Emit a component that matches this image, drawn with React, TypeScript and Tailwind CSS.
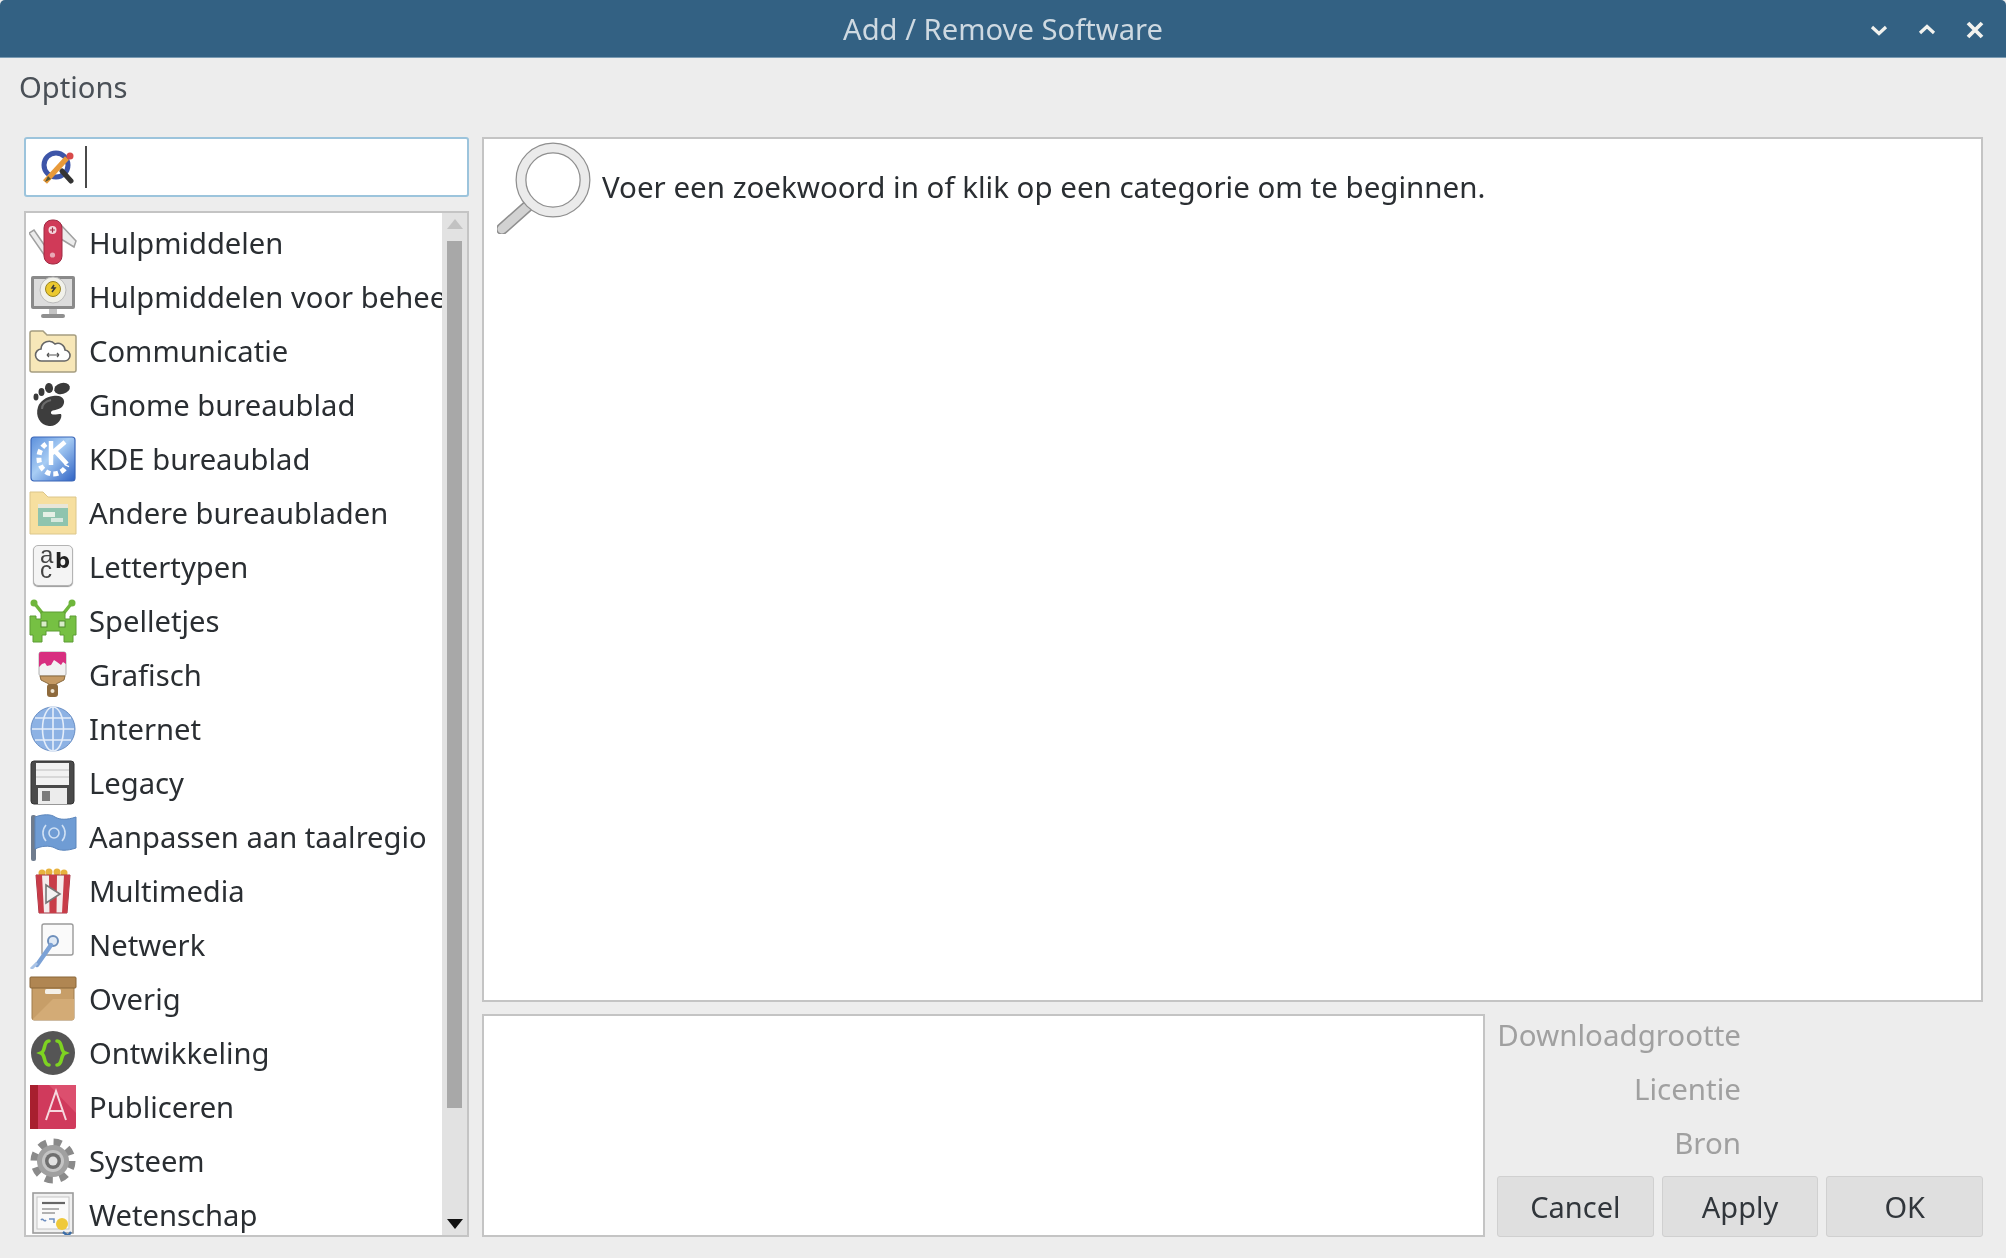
import React from "react";

const S = ({ children }: { children: React.ReactNode }) => (
  <svg viewBox="0 0 48 48" className="w-[48px] h-[48px] shrink-0">{children}</svg>
);

const IconUtilities = () => (
  <S>
    <path d="M0 14 L5 11 L18 30 L16 37 Z" fill="#ececec" stroke="#a0a0a0" strokeWidth="1.5" />
    <path d="M32 6 L47 22 L45 28 L32 20 Z" fill="#ececec" stroke="#a0a0a0" strokeWidth="1.5" />
    <rect x="15" y="1" width="18" height="44" rx="8" fill="#d03a58" stroke="#9f2a42" strokeWidth="1" />
    <circle cx="23.5" cy="11" r="4" fill="#f4d8de" />
    <path d="M23.5 8.5v5M21 11h5" stroke="#a02a42" strokeWidth="1.2" />
    <circle cx="23.5" cy="36" r="2.6" fill="#e8a9b6" />
  </S>
);
const IconAdmin = () => (
  <S>
    <rect x="2" y="3" width="44" height="33" rx="2" fill="#8a8a8a" />
    <rect x="5" y="6" width="38" height="27" fill="#dcdcdc" />
    <circle cx="24" cy="17" r="13" fill="#f1f1ea" stroke="#bbb" strokeWidth="1" />
    <circle cx="24" cy="16" r="7.5" fill="#ecc92f" stroke="#9a8420" strokeWidth="1" />
    <path d="M25 12 l-2 3 h3 l-3 4" stroke="#3a3a3a" strokeWidth="1.5" fill="none" />
    <rect x="20" y="36" width="8" height="5" fill="#c4c4c4" />
    <rect x="12" y="41" width="24" height="4" rx="2" fill="#8f8f8f" />
  </S>
);
const IconComm = () => (
  <S>
    <path d="M1 8 V6 a2 2 0 0 1 2-2 h11 l4 4 h27 a2 2 0 0 1 2 2 v33 a2 2 0 0 1-2 2 H3 a2 2 0 0 1-2-2 Z" fill="#f7e7b8" stroke="#a59d80" strokeWidth="1.5" />
    <path d="M13 34 a6 6 0 0 1-1-12 a8 8 0 0 1 14-5 a7 7 0 0 1 10 6 a5.5 5.5 0 0 1-1 11 Z" fill="#fff" stroke="#666" strokeWidth="1.6" />
    <path d="M18 28 h12 M18 28 l2-2 M18 28 l2 2 M30 28 l-2-2 M30 28 l-2 2" stroke="#555" strokeWidth="1.2" fill="none" />
  </S>
);
const IconGnome = () => (
  <S>
    <ellipse cx="33" cy="7.5" rx="8" ry="5.5" fill="#3a3a3a" transform="rotate(-15 33 7.5)" />
    <ellipse cx="20" cy="7" rx="4" ry="5" fill="#3a3a3a" transform="rotate(-5 20 7)" />
    <ellipse cx="12.5" cy="11" rx="3" ry="4" fill="#3a3a3a" />
    <ellipse cx="7" cy="16" rx="2.5" ry="3.4" fill="#3a3a3a" />
    <path d="M24 15 C34 13 38 20 33 26 C28 30 24 28 22 31 C21 35 28 33 32 33 C34 37 28 46 20 45 C11 44 6 35 9 26 C11 20 17 16 24 15 Z" fill="#3d3d3d" />
    <path d="M13 28 C13 22 18 20 22 19" stroke="#6b6b6b" strokeWidth="2" fill="none" />
  </S>
);
const IconKde = () => (
  <S>
    <defs>
      <linearGradient id="kde" x1="0" y1="0" x2="1" y2="1">
        <stop offset="0" stopColor="#5b8fdc" />
        <stop offset="0.45" stopColor="#a8cdf4" />
        <stop offset="1" stopColor="#2f62c4" />
      </linearGradient>
    </defs>
    <rect x="2" y="2" width="44" height="44" rx="3" fill="url(#kde)" stroke="#3a66b8" strokeWidth="1.2" />
    <path d="M17 9 A16 16 0 0 0 10 24 A15 15 0 0 0 24 39 A15 15 0 0 0 38 30" fill="none" stroke="#fff" strokeWidth="5" strokeDasharray="5 3" />
    <path d="M22 6 V30 M22 19 L36 7 M26 16 L38 29" stroke="#fff" strokeWidth="4.5" fill="none" />
  </S>
);
const IconDesktops = () => (
  <S>
    <path d="M1 3 h13 l5 5 h28 v37 H1 Z" fill="#f6df9f" stroke="#dcc68a" strokeWidth="1" />
    <rect x="9" y="15" width="30" height="22" fill="#e8e6d8" />
    <rect x="9" y="19" width="30" height="18" fill="#8fc4ae" />
    <rect x="14" y="23" width="12" height="5" fill="#e6f0e6" />
    <rect x="22" y="29" width="12" height="4" fill="#d6e8de" />
  </S>
);
const IconFonts = () => (
  <div className="relative w-[48px] h-[48px] shrink-0">
    <div className="absolute left-[4px] top-[2px] w-[40px] h-[41px] rounded-[5px] bg-[#f4f4f4] border border-[#b4b4b4] shadow-[0_1px_1px_#999]" />
    <span className="absolute left-[11px] top-[4px] w-[14px] whitespace-pre-line text-[24px] leading-[15px] font-['Liberation_Sans',sans-serif] text-[#444]">{"a\nc"}</span>
    <span className="absolute left-[26px] top-[8px] text-[21px] leading-[20px] font-bold font-['DejaVu_Sans',sans-serif] text-[#222]">b</span>
  </div>
);
const IconGames = () => (
  <S>
    <circle cx="5" cy="6" r="3.5" fill="#6fb63c" />
    <circle cx="43" cy="6" r="3.5" fill="#6fb63c" />
    <path d="M6 7 L14 17 M42 7 L34 17" stroke="#6fb63c" strokeWidth="3.5" />
    <path d="M12 15 h24 v7 h5 v-3 h6 v19 h-3 v7 h-9 v-7 h-4 v-4 h-14 v4 h-4 v7 h-9 v-7 h-3 V19 h6 v3 h5 Z" fill="#76c043" stroke="#5d9c34" strokeWidth="1" />
    <rect x="12" y="24" width="6" height="6" fill="#d8ecc8" stroke="#4e8a2c" />
    <rect x="30" y="24" width="6" height="6" fill="#d8ecc8" stroke="#4e8a2c" />
  </S>
);
const IconGraphics = () => (
  <S>
    <rect x="10" y="1" width="27" height="24" rx="2" fill="#f2f2f2" stroke="#b0b0b0" />
    <path d="M10 3 a2 2 0 0 1 2-2 h23 a2 2 0 0 1 2 2 v10 l-3-2 -2 3 -4-3 -3-2 -3 5 -4 1 -2-3 -3 1 -3 3 Z" fill="#d82f80" />
    <path d="M11 25 h25 l-1 4 -8 4 v7 h-7 v-7 l-8-4 Z" fill="#c59a64" stroke="#8a6a3e" />
    <rect x="18" y="33" width="11" height="13" rx="3" fill="#8e6a3c" />
    <circle cx="23.5" cy="40" r="2" fill="#efe6d4" />
  </S>
);
const IconInternet = () => (
  <S>
    <circle cx="24" cy="24" r="22" fill="#8db2e4" stroke="#6a8fc4" strokeWidth="1" />
    <path d="M3 24 H45 M6 13 H42 M6 35 H42 M24 2 V46" stroke="#e4edf9" strokeWidth="1.6" fill="none" />
    <ellipse cx="24" cy="24" rx="10.5" ry="22" stroke="#e4edf9" strokeWidth="1.6" fill="none" />
  </S>
);
const IconLegacy = () => (
  <S>
    <path d="M2 5 a3 3 0 0 1 3-3 h37 a3 3 0 0 1 3 3 v37 a3 3 0 0 1-3 3 H5 a3 3 0 0 1-3-3 Z" fill="#4a4a4a" stroke="#333" />
    <rect x="7" y="4" width="33" height="22" fill="#f2f2f2" />
    <path d="M7 11 h33 M7 18 h33" stroke="#bdbdbd" strokeWidth="1.2" />
    <rect x="9" y="29" width="29" height="16" fill="#ececec" />
    <rect x="13" y="32" width="8" height="10" fill="#7a7a7a" />
  </S>
);
const IconLocale = () => (
  <S>
    <rect x="2" y="2" width="5" height="46" rx="2" fill="#6f7c8e" />
    <path d="M6 4 C14 1 22 1 26 4 C31 7 38 7 47 4 V35 C38 38 31 38 26 35 C20 32 12 33 6 36 Z" fill="#6f9cd4" stroke="#5c86bc" />
    <circle cx="25" cy="20" r="5" fill="none" stroke="#cfe0f4" strokeWidth="1.6" />
    <path d="M17 12 a12 12 0 0 0 0 16 M33 12 a12 12 0 0 1 0 16" stroke="#cfe0f4" strokeWidth="1.6" fill="none" />
  </S>
);
const IconMultimedia = () => (
  <S>
    <circle cx="13" cy="6" r="3.5" fill="#e7b23e" />
    <circle cx="20" cy="5" r="3.5" fill="#e7b23e" />
    <circle cx="28" cy="5" r="3.5" fill="#e7b23e" />
    <circle cx="35" cy="6" r="3.5" fill="#e7b23e" />
    <path d="M7 8 H41 L38 46 H10 Z" fill="#f4ecec" stroke="#a03040" />
    <path d="M7 8 H13 L15 46 H10 Z M20 8 H28 L27.5 46 H20.5 Z M35 8 H41 L38 46 H33 Z" fill="#c83c48" />
    <path d="M17 18 L31 27 L17 36 Z" fill="#f2f2f2" stroke="#777" strokeWidth="1.6" />
  </S>
);
const IconNetwork = () => (
  <S>
    <rect x="13" y="3" width="31" height="31" rx="2" fill="#fafafa" stroke="#9a9a9a" strokeWidth="1.4" />
    <circle cx="24" cy="20" r="5" fill="#dfe9f5" stroke="#6e8fbb" strokeWidth="2" />
    <path d="M22 24 L8 44" stroke="#7ca2d6" strokeWidth="4.5" strokeLinecap="round" />
    <path d="M2 48 L8 42" stroke="#a9c3e6" strokeWidth="3" />
  </S>
);
const IconOverig = () => (
  <S>
    <rect x="3" y="8" width="42" height="37" rx="2" fill="#c79e68" stroke="#a07c4c" />
    <path d="M3 45 L24 24 H45 V45 Z" fill="#d3ab76" />
    <rect x="1" y="2" width="46" height="11" rx="1" fill="#b08652" stroke="#8a6638" />
    <rect x="16" y="14" width="16" height="5" rx="1.5" fill="#f4f0e8" />
  </S>
);
const IconDev = () => (
  <S>
    <circle cx="24" cy="24" r="22" fill="#555" />
    <path d="M20 12 C14 12 17 22 12 24 C17 26 14 36 20 36 M28 12 C34 12 31 22 36 24 C31 26 34 36 28 36" stroke="#7ed321" strokeWidth="3.6" fill="none" strokeLinecap="round" />
  </S>
);
const IconPublish = () => (
  <S>
    <rect x="1" y="2" width="46" height="44" rx="2" fill="#d03a5c" />
    <path d="M9 2 H1 V46 H9 Z" fill="#a81f2f" />
    <path d="M47 2 V30 L20 2 Z" fill="#dc4f6e" />
    <path d="M17 37 L27 8 L37 37 M20 28 H34" stroke="#f6d8de" strokeWidth="2" fill="none" />
  </S>
);
const IconSystem = () => (
  <S>
    <circle cx="24" cy="24" r="17" fill="none" stroke="#8a8a8a" strokeWidth="11" strokeDasharray="7 6.35" />
    <circle cx="24" cy="24" r="16" fill="#a0a0a0" />
    <circle cx="24" cy="24" r="11" fill="#c4c4c4" />
    <circle cx="24" cy="24" r="8" fill="#6f6f6f" />
    <circle cx="24" cy="24" r="4.5" fill="#e2e2e2" />
  </S>
);
const IconScience = () => (
  <S>
    <rect x="4" y="2" width="40" height="40" fill="#f0f0f0" stroke="#9c9c9c" strokeWidth="1.6" />
    <rect x="8" y="6" width="32" height="32" fill="#fafafa" stroke="#c4c4c4" />
    <path d="M13 12 H36" stroke="#666" strokeWidth="2.2" />
    <path d="M13 18 H30 M13 22 H26" stroke="#999" strokeWidth="1.5" />
    <path d="M12 29 c2-3 3 3 5 0 M20 28 h5 v4" stroke="#6d8ec0" strokeWidth="1.5" fill="none" />
    <circle cx="33" cy="33" r="6" fill="#efc93a" />
    <path d="M34 41 l5 4 3-4" stroke="#3c6ea8" strokeWidth="2.4" fill="none" />
  </S>
);

const items: [string, React.FC][] = [
  ["Hulpmiddelen", IconUtilities],
  ["Hulpmiddelen voor beheer", IconAdmin],
  ["Communicatie", IconComm],
  ["Gnome bureaublad", IconGnome],
  ["KDE bureaublad", IconKde],
  ["Andere bureaubladen", IconDesktops],
  ["Lettertypen", IconFonts],
  ["Spelletjes", IconGames],
  ["Grafisch", IconGraphics],
  ["Internet", IconInternet],
  ["Legacy", IconLegacy],
  ["Aanpassen aan taalregio", IconLocale],
  ["Multimedia", IconMultimedia],
  ["Netwerk", IconNetwork],
  ["Overig", IconOverig],
  ["Ontwikkeling", IconDev],
  ["Publiceren", IconPublish],
  ["Systeem", IconSystem],
  ["Wetenschap", IconScience],
];

const Btn = ({ label }: { label: string }) => (
  <button className="flex-1 rounded-[3px] bg-[#dfdfdf] border border-[#d0d0d0] text-[#31363b] text-[29px] leading-none">
    {label}
  </button>
);

export default function App() {
  return (
    <div className="w-[2006px] h-[1258px] flex flex-col overflow-hidden bg-[#ededed] text-[#31363b] text-[29.5px] font-['Noto_Sans',sans-serif] blur-[0.5px]">
      <header className="relative h-[58px] shrink-0 flex items-center justify-center bg-[#336183] border-b border-[#7a9bb3] rounded-t-[5px]">
        <span className="text-[#ced9e1] text-[29.2px] pt-[3px]">Add / Remove Software</span>
        <div className="absolute right-[22px] top-[21px] flex gap-[30px]">
          <svg viewBox="0 0 18 18" className="w-[18px] h-[18px]">
            <path d="M2 6 L9 12.5 L16 6" stroke="#f2f2ee" strokeWidth="3.2" fill="none" />
          </svg>
          <svg viewBox="0 0 18 18" className="w-[18px] h-[18px]">
            <path d="M2 12 L9 5.5 L16 12" stroke="#f2f2ee" strokeWidth="3.2" fill="none" />
          </svg>
          <svg viewBox="0 0 18 18" className="w-[18px] h-[18px]">
            <path d="M2 2 L16 16 M16 2 L2 16" stroke="#f2f2ee" strokeWidth="3.8" fill="none" />
          </svg>
        </div>
      </header>

      <div className="h-[79px] shrink-0 px-[19px] pt-[10px] text-[29.2px] leading-[38px] text-[#4a5057]">Options</div>

      <main className="flex-1 min-h-0 flex gap-[13px] pl-[24px] pr-[23px] pb-[21px]">
        <aside className="w-[445px] shrink-0 flex flex-col gap-[14px]">
          <div className="h-[60px] shrink-0 flex items-center gap-[10px] pl-[15px] bg-white border-2 border-[#9cc4dc] rounded-[3px]">
            <svg viewBox="0 0 34 34" className="w-[34px] h-[34px]">
              <circle cx="15" cy="15" r="12" fill="none" stroke="#3d55a8" strokeWidth="5" />
              <path d="M30 31 L21 21" stroke="#333" strokeWidth="5" strokeLinecap="round" />
              <path d="M4 32 L26 8" stroke="#e89a3a" strokeWidth="5.5" />
              <path d="M4 32 L7 26 L10 29 Z" fill="#553" />
              <circle cx="29" cy="6" r="3.5" fill="#d84a4a" />
            </svg>
            <span className="w-[2px] h-[42px] bg-[#4a4a4a]" />
          </div>

          <div className="flex-1 min-h-0 flex border-2 border-[#c4c4c4] bg-white">
            <ul className="flex-1 min-w-0 overflow-hidden pt-[3px] pl-[3px] text-[29.2px]">
              {items.map(([label, Icon]) => (
                <li key={label} className="h-[54px] flex items-center gap-[12px] whitespace-nowrap">
                  <Icon />
                  <span className="pt-[2px] text-[#2a2e32]">{label}</span>
                </li>
              ))}
            </ul>
            <div className="w-[25px] shrink-0 flex flex-col items-center bg-[#e2e2e2] pt-[6px] pb-[6px]">
              <svg viewBox="0 0 16 10" className="w-[16px] h-[10px] shrink-0">
                <path d="M0 10 L8 0 L16 10 Z" fill="#c2c2c2" />
              </svg>
              <div className="w-[15px] h-[867px] mt-[12px] shrink-0 bg-[#a8a8a8]" />
              <div className="flex-1" />
              <svg viewBox="0 0 16 10" className="w-[16px] h-[10px] shrink-0">
                <path d="M0 0 L16 0 L8 10 Z" fill="#111" />
              </svg>
            </div>
          </div>
        </aside>

        <section className="flex-1 min-w-0 flex flex-col gap-[12px]">
          <div className="flex-1 min-h-0 flex items-start gap-[11px] pl-[13px] pt-[3px] bg-white border-2 border-[#c4c4c4]">
            <svg viewBox="0 0 94 92" className="w-[94px] h-[92px] shrink-0">
              <path d="M5 87 L32 63" stroke="#8f8f8f" strokeWidth="12" strokeLinecap="round" />
              <path d="M5 87 L32 63" stroke="#d2d2d2" strokeWidth="9" strokeLinecap="round" />
              <circle cx="56" cy="38" r="32" fill="none" stroke="#8f8f8f" strokeWidth="11" />
              <circle cx="56" cy="38" r="32" fill="none" stroke="#ebebeb" strokeWidth="8.5" />
            </svg>
            <span className="mt-[23px] text-[#2a2e32]">Voer een zoekwoord in of klik op een categorie om te beginnen.</span>
          </div>

          <div className="h-[223px] shrink-0 flex gap-[12px]">
            <div className="flex-1 min-w-0 bg-white border-2 border-[#c4c4c4]" />
            <div className="w-[486px] shrink-0 flex flex-col">
              <div className="w-[244px] flex flex-col items-end text-[#a0a0a0]">
                <span className="h-[54px] pt-[1px] leading-[40px]">Downloadgrootte</span>
                <span className="h-[54px] pt-[1px] leading-[40px]">Licentie</span>
                <span className="h-[54px] pt-[1px] leading-[40px]">Bron</span>
              </div>
              <div className="mt-auto h-[61px] flex gap-[8px]">
                <Btn label="Cancel" />
                <Btn label="Apply" />
                <Btn label="OK" />
              </div>
            </div>
          </div>
        </section>
      </main>
    </div>
  );
}
